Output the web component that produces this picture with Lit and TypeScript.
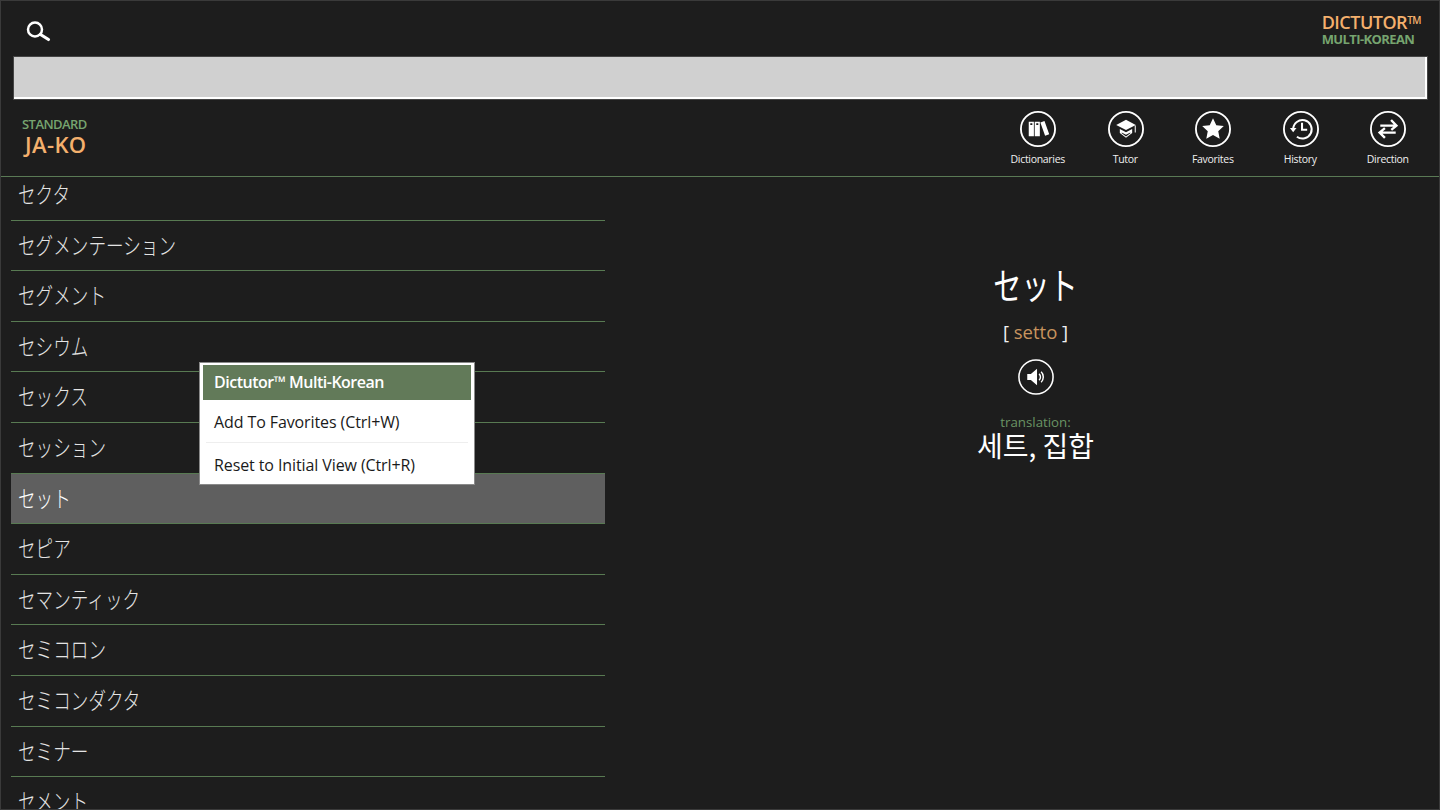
import { LitElement, html, css, svg } from "lit";
import { customElement } from "lit/decorators.js";

const WORDS = ["セクタ","セグメンテーション","セグメント","セシウム","セックス","セッション","セット","セピア","セマンティック","セミコロン","セミコンダクタ","セミナー","セメント"];

const ICONS: Record<string, unknown> = {
  Dictionaries: svg`<path fill="#fff" d="M8.500 10.500h5v14h-5zM14.300 10.500h5v14h-5zM19.800 11.200l4-1.400 4.600 12.800-4 1.500z"/><path fill="#1d1d1d" d="M10 12h2v1.600h-2zM15.800 12h2v1.600h-2z"/>`,
  Tutor: svg`<path fill="#fff" d="M17.500 8.500 27 13.500l-9.500 5-9.500-5z"/><path fill="#fff" d="M11.500 17.500l6 3.200 6-3.200v4l-6 4.600-6-4.600z"/><path fill="#1d1d1d" d="M13.300 20.800l4.200 2.300 4.200-2.300v.9l-4.200 3-4.200-3z"/><path fill="none" stroke="#fff" d="M26.500 14v7"/>`,
  Favorites: svg`<path fill="#fff" d="M17.500 7l3.200 6.800 7.300.9-5.400 5 1.400 7.300-6.500-3.600-6.500 3.600 1.400-7.300-5.400-5 7.300-.9z"/>`,
  History: svg`<path fill="none" stroke="#fff" stroke-width="1.900" d="M9.900 17.500A9 9 0 1 1 13.500 25"/><path fill="#fff" d="M6.700 16.500h6.400l-3.200 4.200z"/><path fill="none" stroke="#fff" stroke-width="2" d="M18.500 11.500v6.800h5"/>`,
  Direction: svg`<path fill="none" stroke="#fff" stroke-width="2.300" d="M10 14.200h15M20.500 8.800l5.200 5.400-5 4.200M25 21H10M14.500 16.600 9.300 21l5.200 5.200"/>`,
};

@customElement("app-root")
export class AppRoot extends LitElement {
  static styles = css`
    :host {
      display: block;
      width: 1440px;
      height: 810px;
      overflow: hidden;
      font-family: "Open Sans", "Noto Sans CJK JP", sans-serif;
      color: #fff;
    }
    .window {
      position: relative;
      box-sizing: border-box;
      width: 1440px;
      height: 810px;
      background: #1d1d1d;
      border: 1px solid #3a3a3a;
      display: flex;
      flex-direction: column;
      overflow: hidden;
    }
    .top {
      height: 55px;
      flex: none;
      display: flex;
      justify-content: space-between;
      align-items: flex-start;
      padding: 0 18px 0 24px;
    }
    .search-btn { width: 28px; height: 28px; margin-top: 17px; display: block; }
    .brand { margin-top: 11px; margin-left: 2px; line-height: 1; }
    .brand-a { font-size: 18px; font-weight: 600; color: #f4b06d; line-height: 20px; letter-spacing: -0.5px; }
    .brand-a sup { font-size: 10px; line-height: 0; vertical-align: 5px; }
    .brand-b { font-size: 13px; font-weight: 700; color: #76a46f; line-height: 15px; letter-spacing: -0.6px; }
    .search {
      flex: none;
      box-sizing: border-box;
      height: 44px;
      margin: 0 11px 0 12px;
      background: #d0d0d0;
      border: 1px solid #444;
      box-shadow: inset -2px -2px 0 #fff;
    }
    .bar {
      flex: none;
      box-sizing: border-box;
      height: 77px;
      border-bottom: 1px solid #5a7a55;
      display: flex;
      justify-content: space-between;
      align-items: flex-start;
    }
    .dict { margin: 16px 0 0 21px; }
    .dict-a { font-size: 13px; font-weight: 600; line-height: 16px; color: #76a46f; letter-spacing: -0.55px; }
    .dict-b { font-size: 22px; font-weight: 600; line-height: 26px; color: #f4b06d; margin-left: 3px; letter-spacing: 0.4px; margin-top: -1px; }
    .actions { display: flex; margin: 11px 7px 0 0; }
    .action {
      width: 87.500px;
      display: flex;
      flex-direction: column;
      align-items: center;
      font-size: 10.500px;
      letter-spacing: -0.3px;
      color: #f0f0f0;
      line-height: 14px;
    }
    .action svg { width: 36px; height: 36px; display: block; margin-bottom: 5px; }
    .action span { margin-right: 1px; }
    .body { flex: 1; min-height: 0; display: flex; }
    .list { width: 594px; margin-left: 10px; flex: none; overflow: hidden; }
    .rows { margin-top: -7px; }
    .row {
      box-sizing: border-box;
      height: 50.600px;
      border-bottom: 1px solid #587a52;
      padding-left: 7px;
      font-size: 23px;
      font-weight: 300;
      line-height: 49px;
      color: #e4e4e4;
      white-space: nowrap;
    }
    .row span { display: inline-block; transform: scaleX(0.765); transform-origin: left center; }
    .row.sel { background: #5f5f5f; color: #fff; border-top: 1px solid #587a52; margin-top: -1px; height: 51.600px; }
    .detail {
      flex: 1;
      display: flex;
      flex-direction: column;
      align-items: center;
      padding-top: 84px;
      padding-left: 27px;
      box-sizing: border-box;
    }
    .word { font-size: 37px; line-height: 50px; transform: scaleX(0.76); }
    .reading { font-size: 18.500px; line-height: 24px; margin-top: 9px; color: #f0f0f0; }
    .reading span { color: #c8945e; }
    .speak { width: 36px; height: 36px; display: block; margin-top: 15px; }
    .tl { font-size: 13.300px; line-height: 16px; color: #6a9464; margin-top: 19px; }
    .ko { font-family: "Noto Sans CJK KR", sans-serif; font-size: 28px; line-height: 32px; margin-top: -1px; }
    .menu {
      position: absolute;
      left: 198px;
      top: 361px;
      width: 276px;
      box-sizing: border-box;
      background: #fff;
      border: 1px solid #8a8a8a;
      padding: 2px 3px 0;
      color: #1a1a1a;
      font-size: 16px;
      letter-spacing: -0.1px;
    }
    .mi { height: 35px; line-height: 34px; padding-left: 11px; }
    .mi.on { background: #627a59; color: #fff; font-weight: 600; letter-spacing: -0.5px; }
    .mi.a { height: 42px; line-height: 44px; }
    .sep { height: 1px; background: #eeeeee; margin: 0 3px 0 3px; }
    .mi.b { height: 41px; line-height: 44px; }
  `;

  private circle(inner: unknown) {
    return html`<svg viewBox="0 0 35 35"><circle cx="17.500" cy="17.500" r="16.600" fill="none" stroke="#fff" stroke-width="1.800"/>${inner}</svg>`;
  }

  render() {
    return html`
      <div class="window">
        <div class="top">
          <svg class="search-btn" viewBox="0 0 28 28">
            <circle cx="10" cy="11.500" r="7" fill="none" stroke="#fff" stroke-width="2.500"/>
            <path d="M15.500 16.500 23.500 21.500" stroke="#fff" stroke-width="3.200" stroke-linecap="round"/>
          </svg>
          <div class="brand">
            <div class="brand-a">DICTUTOR<sup>TM</sup></div>
            <div class="brand-b">MULTI-KOREAN</div>
          </div>
        </div>
        <div class="search"></div>
        <div class="bar">
          <div class="dict">
            <div class="dict-a">STANDARD</div>
            <div class="dict-b">JA-KO</div>
          </div>
          <div class="actions">
            ${Object.keys(ICONS).map((k) => html`<div class="action">${this.circle(ICONS[k])}<span>${k}</span></div>`)}
          </div>
        </div>
        <div class="body">
          <div class="list">
            <div class="rows">
              ${WORDS.map((w, i) => html`<div class="row ${i === 6 ? "sel" : ""}"><span>${w}</span></div>`)}
            </div>
          </div>
          <div class="detail">
            <div class="word">セット</div>
            <div class="reading">[ <span>setto</span> ]</div>
            <svg class="speak" viewBox="0 0 35 35">
              <circle cx="17.500" cy="17.500" r="16.600" fill="none" stroke="#fff" stroke-width="1.500"/>
              <path fill="#fff" d="M9 14.500h3.500l6-5v16l-6-5H9z"/>
              <path fill="none" stroke="#fff" stroke-width="1.400" d="M20.500 14.500a4 4 0 0 1 0 6M22.500 12.500a7 7 0 0 1 0 10"/>
            </svg>
            <div class="tl">translation:</div>
            <div class="ko">세트, 집합</div>
          </div>
        </div>
        <div class="menu">
          <div class="mi on">Dictutor™ Multi-Korean</div>
          <div class="mi a">Add To Favorites (Ctrl+W)</div>
          <div class="sep"></div>
          <div class="mi b">Reset to Initial View (Ctrl+R)</div>
        </div>
      </div>
    `;
  }
}
